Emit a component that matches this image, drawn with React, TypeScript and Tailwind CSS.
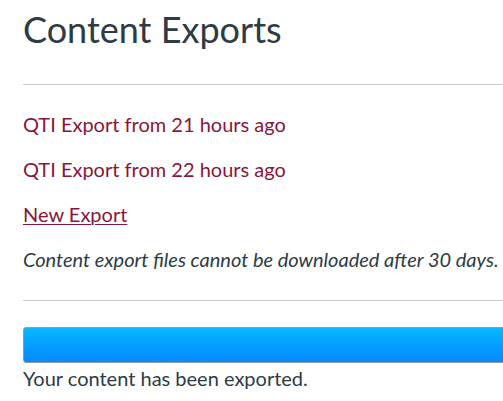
export default function App() {
  const exports = ["QTI Export from 21 hours ago", "QTI Export from 22 hours ago"];

  return (
    <div className="h-screen w-full overflow-hidden bg-white text-[#2d3b45]" style={{ fontFamily: "Lato, 'Open Sans', sans-serif" }}>
      <div className="w-[620px] pl-[23px]">
        <h1 className="mt-[7px] text-[36px] leading-[45px] font-normal">Content Exports</h1>
        <hr className="mt-[32px] border-0 border-t border-[#c7cdd1]" />

        <div className="mt-[24px] text-[20px] leading-[30px]">
          {exports.map((e) => (
            <p key={e} className="mb-[15px]">
              <a href="#" className="text-[#8b1538] no-underline">{e}</a>
            </p>
          ))}
          <p className="mb-[15px]">
            <a href="#" className="text-[#8b1538] underline decoration-1 underline-offset-2">New Export</a>
          </p>
          <p className="italic">Content export files cannot be downloaded after 30 days.</p>
        </div>

        <hr className="mt-[26px] border-0 border-t border-[#c7cdd1]" />

        <div className="mt-[26px] h-[36px] rounded-l-[3px] border border-[#8f9ca3] bg-gradient-to-b from-[#0cb6ff] to-[#0a88ff]" />
        <p className="text-[20px] leading-[30px]">Your content has been exported.</p>
      </div>
    </div>
  );
}
